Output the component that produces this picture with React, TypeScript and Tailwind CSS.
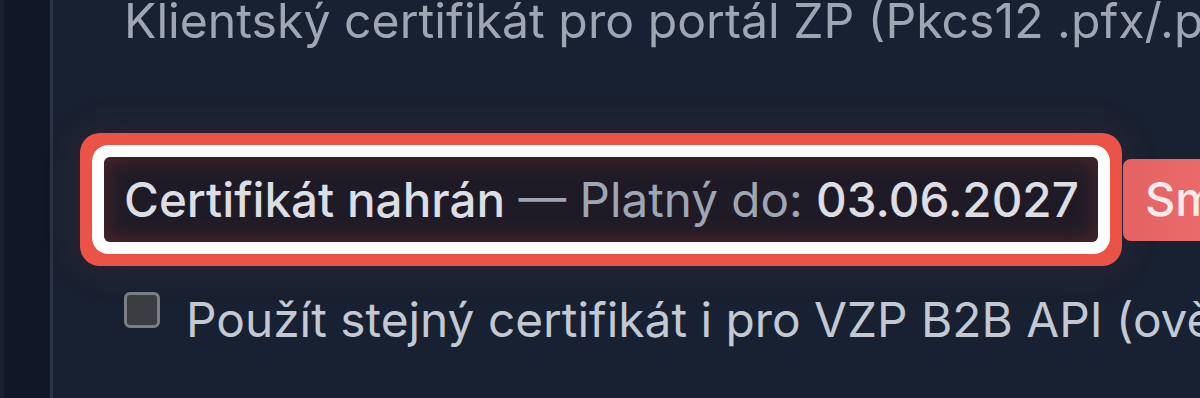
import React from "react";

export default function App() {
  return (
    <div
      className="flex h-[398px] w-[1200px] overflow-hidden bg-[#182131]"
      style={{ fontFamily: "Inter, 'Noto Sans', sans-serif" }}
    >
      <div className="w-[4px] shrink-0 bg-[#19212f]" />
      <div className="w-[46px] shrink-0 bg-[#111726]" />
      <div className="w-[3px] shrink-0 bg-[#2a3444]" />
      <div className="flex min-w-0 flex-1 flex-col pl-[51px]">
        <div className="mt-[-12px] whitespace-nowrap pl-5 text-[48.2px] leading-[66px] text-[#9ea6b4]">
          Klientský certifikát pro portál ZP (Pkcs12 .pfx/.p12)
        </div>
        <div className="mt-[103px] flex items-center whitespace-nowrap">
          <div className="flex h-[85px] w-[994px] shrink-0 items-center rounded-[6px] bg-[#1f1b26] px-5 shadow-[inset_0_0_24px_rgba(120,48,52,0.6),0_0_0_12px_#ffffff,0_0_0_24px_#ec5347,0_0_40px_24px_rgba(236,83,71,0.12)]">
            <span className="text-[47.6px] text-[#9ea6b4]">
              <span className="font-medium text-[#dcdee4]">Certifikát nahrán</span> — Platný do:{" "}
              <span className="font-medium text-[#dcdee4]">03.06.2027</span>
            </span>
          </div>
          <button className="ml-[25px] flex h-[82px] shrink-0 items-center rounded-l-[8px] bg-gradient-to-r from-[#e46262] to-[#f47676] pl-[22px] pr-6 text-[47px] font-medium text-[#fdeaea]">
            Smazat
          </button>
        </div>
        <div className="mt-[50px] flex items-start whitespace-nowrap pl-5">
          <div className="h-[36px] w-[36px] shrink-0 rounded-[6px] border-[3px] border-[#7b7e83] bg-[#3c3d40]" />
          <span className="ml-[26px] mt-[-5px] text-[47.8px] leading-[66px] text-[#c3c9d3]">
            Použít stejný certifikát i pro VZP B2B API (ověření)
          </span>
        </div>
      </div>
    </div>
  );
}
